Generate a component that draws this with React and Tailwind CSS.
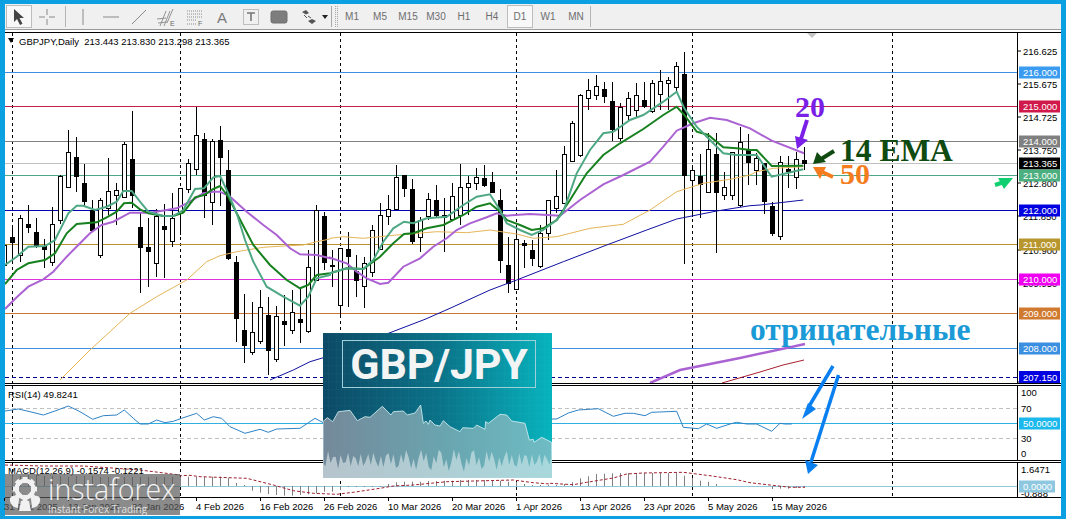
import React from "react";

// readings were taken off 3x crops, so every row is [x, y] or y values in crop pixels
const pts = (rows, x0, y0) => rows.map(([x, y]) => `${(x0 + x / 3).toFixed(1)},${(y0 + y / 3).toFixed(1)}`).join(" ");

// [high, low, bodyTop, bodyBottom, black]
const candlesA = [
  [440, 530, 465, 525, 0], [405, 520, 441, 458, 1], [375, 515, 385, 495, 0], [345, 430, 402, 413, 1], [385, 475, 427, 467, 1],
  [448, 535, 470, 478, 1], [352, 527, 403, 517, 0], [255, 402, 259, 392, 0], [120, 292, 187, 292, 0], [142, 305, 202, 260, 1],
  [222, 350, 280, 335, 1], [330, 425, 362, 420, 1], [325, 505, 332, 496, 0], [205, 375, 304, 355, 0], [280, 405, 301, 316, 0],
  [157, 325, 163, 322, 0], [63, 355, 208, 316, 1], [365, 608, 411, 472, 1], [385, 590, 472, 485, 1], [358, 560, 379, 520, 0],
  [342, 563, 408, 419, 1], [310, 470, 385, 455, 0], [295, 435, 295, 370, 0], [208, 310, 220, 298, 0], [50, 255, 136, 238, 0],
  [130, 383, 148, 315, 1], [148, 405, 155, 337, 0], [108, 347, 151, 203, 1], [180, 510, 240, 505, 1], [498, 755, 517, 686, 1],
  [612, 820, 720, 767, 1], [635, 795, 727, 787, 0], [600, 763, 652, 754, 0], [622, 855, 676, 780, 1], [648, 815, 679, 808, 0],
  [615, 767, 693, 704, 1], [600, 733, 667, 721, 0], [598, 760, 687, 698, 1], [480, 730, 532, 724, 0], [345, 570, 360, 570, 0],
  [367, 540, 378, 518, 1],
];
const candlesB = [
  [570, 680, 617, 620, 1], [565, 775, 565, 737, 0], [517, 740, 567, 590, 1], [585, 710, 633, 660, 1], [590, 743, 610, 680, 0],
  [495, 650, 511, 638, 0], [430, 570, 466, 568, 0], [405, 495, 449, 469, 0], [315, 450, 351, 449, 0], [347, 410, 347, 386, 1],
  [358, 552, 387, 543, 1], [470, 577, 481, 533, 0], [400, 480, 418, 470, 0], [375, 475, 421, 465, 1], [415, 575, 466, 472, 1],
  [370, 480, 408, 478, 0], [312, 495, 381, 467, 0], [348, 465, 370, 382, 0], [325, 390, 352, 370, 0], [315, 380, 354, 375, 1],
  [337, 400, 366, 396, 1], [388, 638, 420, 602, 1], [532, 698, 616, 669, 1], [508, 690, 538, 689, 0], [540, 625, 551, 555, 1],
  [540, 617, 571, 596, 1], [495, 625, 520, 620, 0], [420, 540, 421, 520, 0], [330, 460, 409, 445, 0], [258, 432, 283, 430, 0],
  [183, 307, 190, 305, 0], [102, 290, 105, 287, 0], [57, 150, 91, 115, 0], [45, 120, 79, 107, 0], [65, 128, 88, 110, 1],
  [67, 243, 124, 207, 1], [130, 243, 142, 236, 0], [97, 180, 115, 167, 0], [70, 175, 106, 150, 0], [65, 145, 120, 138, 1],
  [60, 160, 70, 155, 0], [30, 150, 64, 103, 0], [50, 150, 62, 70, 0], [5, 95, 18, 83, 0], [-24, 613, 42, 345, 1],
  [320, 470, 331, 361, 0], [283, 475, 349, 372, 1], [220, 400, 268, 397, 0], [220, 580, 283, 398, 1], [335, 420, 382, 406, 0],
  [277, 420, 278, 405, 0], [200, 440, 247, 437, 0], [222, 375, 270, 308, 1],
];
const candlesC = [
  [370, 465, 385, 422, 0], [400, 553, 400, 515, 1], [515, 618, 530, 610, 1], [378, 630, 397, 620, 0],
  [378, 475, 417, 425, 1], [365, 478, 388, 443, 0], [352, 420, 391, 401, 1],
];
const toOrig = (rows, y0) => rows.map((r) => ({ high: y0 + r[0] / 3, low: y0 + r[1] / 3, top: y0 + r[2] / 3, bottom: y0 + r[3] / 3, black: r[4] }));
const candles = [...toOrig(candlesA, 90), ...toOrig(candlesB, 60), ...toOrig(candlesC, 30)];

const lightGreen =
  pts([[15, 525], [50, 500], [85, 470], [135, 468], [165, 450], [205, 370], [230, 347], [250, 347], [285, 360], [320, 350], [350, 335], [370, 303], [395, 303], [420, 335], [445, 365], [490, 378], [520, 378], [550, 360], [585, 297], [612, 295], [640, 262], [660, 258], [685, 310], [710, 370], [735, 450], [760, 515], [800, 590], [850, 620], [900, 647], [925, 620], [950, 565], [990, 555]], 0, 90) + " " +
  pts([[0, 640], [50, 625], [100, 627], [130, 600], [160, 545], [190, 505], [222, 485], [250, 490], [290, 475], [350, 470], [400, 435], [440, 410], [480, 403], [510, 450], [530, 490], [570, 510], [605, 525], [640, 510], [680, 480], [700, 455], [740, 340], [780, 270], [820, 220], [850, 215], [900, 180], [940, 165], [1000, 125], [1040, 95], [1063, 145], [1100, 200], [1135, 235], [1180, 280], [1220, 285], [1260, 285]], 330, 60) + " " +
  pts([[50, 375], [95, 440], [130, 432], [190, 418]], 740, 30);
const darkGreen =
  pts([[15, 582], [50, 540], [85, 520], [135, 510], [165, 490], [200, 430], [230, 402], [290, 397], [320, 382], [350, 365], [372, 340], [395, 338], [420, 358], [445, 370], [490, 378], [520, 378], [550, 368], [585, 322], [612, 315], [640, 297], [660, 288], [685, 320], [710, 370], [760, 465], [810, 525], [860, 570], [900, 595], [925, 585], [950, 555], [990, 550]], 0, 90) + " " +
  pts([[0, 640], [50, 625], [100, 627], [150, 590], [190, 550], [222, 522], [250, 520], [290, 505], [340, 495], [400, 465], [440, 440], [480, 430], [510, 455], [530, 480], [570, 495], [605, 510], [640, 505], [680, 480], [720, 420], [770, 340], [820, 285], [870, 250], [940, 207], [1000, 165], [1040, 140], [1063, 165], [1100, 215], [1135, 225], [1180, 262], [1220, 265], [1260, 270]], 330, 60) + " " +
  pts([[50, 360], [95, 408], [190, 407]], 740, 30);
const purple =
  pts([[15, 657], [50, 622], [85, 590], [130, 568], [160, 545], [200, 500], [235, 465], [270, 430], [305, 405], [340, 395], [390, 368], [450, 368], [500, 360], [530, 355], [570, 335], [610, 310], [640, 305], [660, 305], [690, 320], [740, 365], [790, 405], [830, 435], [870, 475], [900, 493], [950, 495], [990, 505]], 0, 90) + " " +
  pts([[0, 593], [50, 610], [80, 635], [110, 655], [150, 672], [175, 668], [220, 620], [270, 595], [310, 560], [350, 535], [380, 510], [420, 490], [470, 472], [500, 460], [530, 467], [600, 462], [690, 467], [750, 420], [820, 373], [880, 345], [960, 305], [1000, 260], [1040, 212], [1090, 190], [1140, 173], [1190, 180], [1260, 205]], 330, 60) + " " +
  pts([[95, 332], [192, 370]], 740, 30);
const gold =
  pts([[180, 870], [270, 780], [390, 670], [470, 620], [560, 570], [620, 515], [660, 497], [710, 485], [790, 472], [850, 468], [910, 465], [950, 455], [990, 447]], 0, 90) + " " +
  pts([[0, 535], [40, 530], [100, 535], [200, 525], [320, 515], [410, 518], [480, 510], [560, 522], [610, 535], [680, 530], [780, 505], [880, 493], [960, 450], [1040, 395], [1120, 370], [1200, 358], [1260, 345]], 330, 60) + " " +
  pts([[50, 425], [100, 415], [190, 410]], 740, 30);
const navy =
  pts([[810, 870], [880, 840], [930, 815], [990, 797]], 0, 90) + " " +
  pts([[285, 778], [360, 745], [480, 690], [560, 660], [700, 605], [830, 555], [950, 510], [1040, 477], [1160, 453], [1260, 437]], 330, 60) + " " +
  pts([[60, 525], [190, 510]], 740, 30);
const slowPurple = "650,383 680,370 740,358 805,344";
const slowRed = "722,383 760,372 783,365 804,360";

const rsiLine =
  pts([[15, 93], [55, 87], [90, 95], [130, 105], [165, 93], [205, 78], [240, 95], [278, 118], [310, 107], [350, 105], [373, 90], [400, 115], [420, 132], [445, 132], [470, 120], [495, 128], [520, 124], [545, 115], [590, 100], [613, 120], [640, 110], [665, 115], [690, 140], [735, 160], [780, 148], [805, 157], [830, 147], [900, 145], [945, 115], [970, 128]], 0, 380) + " " +
  pts([[0, 105], [20, 105], [55, 87], [85, 78], [145, 74], [190, 97], [225, 88], [250, 88], [285, 95], [305, 85], [380, 82], [400, 130], [445, 134], [470, 120], [500, 133], [540, 120], [560, 115], [590, 120], [620, 120], [665, 142], [690, 118], [705, 120], [725, 120]], 550, 384);
const macdSignal =
  pts([[15, 255], [130, 258], [250, 258], [420, 270], [540, 285]], 0, 380) + " " +
  pts([[0, 47], [30, 46], [60, 50], [200, 55], [280, 75], [340, 92], [400, 100], [470, 103], [520, 97], [600, 85], [640, 78], [700, 75], [800, 65], [1000, 60], [1060, 68], [1110, 72]], 180, 460) + " " +
  pts([[0, 298], [70, 302], [110, 295], [190, 282], [230, 270], [280, 267], [400, 265], [480, 275], [560, 287], [600, 296], [660, 303], [720, 310], [765, 310]], 550, 384);
const macdBars = [
  486, 476, 476, 475, 475, 476, 476, 476, 477, 476, 476, 476, 477, 477, 477, 477, 477, 477, 477, 477, 477, 477, 476.7, 476.7, 476.7, 476.7, 476.7, 476.7, 478, 483, 485,
  490.7, 492.7, 494, 495, 495.7, 495.7, 495, 494.3, 493.3, 491.7, 491.7, 490, 487, 487, 487, 487, 487, 484, 482.3, 481.7, 481.7, 481.7, 481, 481, 480.7, 480.7, 480, 480, 480, 480, 480, 480.7, 481.7,
  482, 484, 485, 485, 485, 485, 484, 482.3, 478.3, 476.3, 474, 473.7, 473.3, 473, 473, 473, 473, 473, 473, 473, 473, 475.7, 478, 480.7, 481.7, 484, 486, 486, 486, 486, 486, 486, 489, 488.7, 488.7, 488, 487,
];

const levels = [
  { y: 72.5, color: "#3a8fe0" },
  { y: 106.5, color: "#c0204a" },
  { y: 141.5, color: "#808080" },
  { y: 163.5, color: "#c0c0c0" },
  { y: 175.5, color: "#4fa885" },
  { y: 210.5, color: "#0000b0" },
  { y: 244.5, color: "#b89030" },
  { y: 279.5, color: "#e030e0" },
  { y: 313.5, color: "#c87830" },
  { y: 348.5, color: "#3a8fe0" },
];
const priceTicks = [
  [51, "216.625"], [84, "215.675"], [117, "214.725"], [150, "213.750"], [183, "212.800"], [216, "211.850"],
  [250, "210.900"], [283, "209.950"], [382, "207.100"],
];
const priceLabels = [
  [72.5, "216.000", "#3a9bf0"], [106.5, "215.000", "#d0184a"], [141.5, "214.000", "#808080"], [163.5, "213.365", "#000000"],
  [175.5, "213.000", "#4caf80"], [210.5, "212.000", "#0000e0"], [244.5, "211.000", "#b8962e"], [279.5, "210.000", "#f000f0"],
  [313.5, "209.000", "#d07a30"], [348.5, "208.000", "#3a8fe0"], [377, "207.150", "#0000e0"],
];
const gridX = [12.5, 180.5, 340.5, 516.5, 692.5, 892.5];
const dates = ["31 Dec 2025", "12 Jan 2026", "22 Jan 2026", "4 Feb 2026", "16 Feb 2026", "26 Feb 2026", "10 Mar 2026", "20 Mar 2026", "1 Apr 2026", "13 Apr 2026", "23 Apr 2026", "5 May 2026", "15 May 2026"];

function Grid({ top, bottom }) {
  return gridX.map((x) => <line key={x} x1={x} x2={x} y1={top} y2={bottom} stroke="#000" strokeDasharray="3 3" />);
}

function MainChart() {
  return (
    <svg className="block w-[1012px] h-[350px]" viewBox="5 33 1012 350">
      <Grid top={33} bottom={383} />
      <polygon points="807,33 817,33 812,38" fill="#c4c4c4" />
      {levels.map((l) => <line key={l.y} x1={5} x2={1017} y1={l.y} y2={l.y} stroke={l.color} />)}
      <line x1={5} x2={1017} y1={377.5} y2={377.5} stroke="#000090" strokeDasharray="4 3" />
      {candles.map((c, k) => {
        const x = 4.5 + 8 * k;
        return (
          <g key={k} shapeRendering="crispEdges">
            <line x1={x} x2={x} y1={c.high} y2={c.low} stroke="#000" />
            <rect x={x - 2} y={c.top} width={4} height={Math.max(c.bottom - c.top, 1)} fill={c.black ? "#000" : "#fff"} stroke="#000" />
          </g>
        );
      })}
      <polyline points={gold} fill="none" stroke="#e5b558" />
      <polyline points={navy} fill="none" stroke="#1010a0" />
      <polyline points={slowPurple} fill="none" stroke="#ab63d3" strokeWidth="2.5" />
      <polyline points={slowRed} fill="none" stroke="#a82030" />
      <polyline points={purple} fill="none" stroke="#ab63d3" strokeWidth="2" />
      <polyline points={darkGreen} fill="none" stroke="#17801f" strokeWidth="2" />
      <polyline points={lightGreen} fill="none" stroke="#4fa885" strokeWidth="2" />
      <polygon points="8,38 14,38 11,43" fill="#000" />
      <text x={19} y={44.5} className="text-[9.5px]" xmlSpace="preserve">GBPJPY,Daily  213.443 213.830 213.298 213.365</text>
    </svg>
  );
}

function PriceAxis() {
  return (
    <svg className="block w-[43px] h-[350px]" viewBox="1018 33 43 350">
      {priceTicks.map(([y, t]) => (
        <g key={t}>
          <line x1={1018} x2={1021} y1={y} y2={y} stroke="#000" />
          <text x={1023} y={y + 3.5} className="text-[9.5px]">{t}</text>
        </g>
      ))}
      {priceLabels.map(([y, t, c]) => (
        <g key={t}>
          <rect x={1019} y={y - 6} width={41} height={12} fill={c} />
          <text x={1023} y={y + 3.5} fill="#fff" className="text-[9.5px]">{t}</text>
        </g>
      ))}
    </svg>
  );
}

function RsiPane() {
  return (
    <svg className="block w-[1012px] h-[74px]" viewBox="5 386 1012 74">
      <Grid top={386} bottom={460} />
      <line x1={5} x2={1017} y1={408.5} y2={408.5} stroke="#c0c0c0" strokeDasharray="4 3" />
      <line x1={5} x2={1017} y1={438.5} y2={438.5} stroke="#c0c0c0" strokeDasharray="4 3" />
      <line x1={5} x2={1017} y1={423.5} y2={423.5} stroke="#30b0e0" />
      <polyline points={rsiLine} fill="none" stroke="#2f82c4" />
      <text x={8} y={398} className="text-[9.5px]">RSI(14) 49.8241</text>
    </svg>
  );
}

function RsiAxis() {
  return (
    <svg className="block w-[43px] h-[74px]" viewBox="1018 386 43 74">
      {[[392, "100"], [408, "70"], [438, "30"], [453, "0"]].map(([y, t]) => (
        <text key={t} x={1021} y={y + 3.5} className="text-[9.5px]">{t}</text>
      ))}
      <rect x={1019} y={417.5} width={41} height={12} fill="#1ab8ec" />
      <text x={1023} y={427} fill="#fff" className="text-[9.5px]">50.0000</text>
    </svg>
  );
}

function MacdPane() {
  return (
    <svg className="block w-[1012px] h-[34px]" viewBox="5 463 1012 34">
      <Grid top={463} bottom={497} />
      <line x1={5} x2={1017} y1={486.5} y2={486.5} stroke="#90c8d8" />
      {macdBars.map((y, k) => <line key={k} x1={4.5 + 8 * k} x2={4.5 + 8 * k} y1={486} y2={y} stroke="#808080" />)}
      <polyline points={macdSignal} fill="none" stroke="#a02030" strokeDasharray="3 2" />
      <text x={8} y={474} className="text-[9.5px]">MACD(12,26,9) -0.1574 -0.1221</text>
    </svg>
  );
}

function MacdAxis() {
  return (
    <svg className="block w-[43px] h-[34px]" viewBox="1018 463 43 34">
      <text x={1021} y={472.5} className="text-[9.5px]">1.6471</text>
      <text x={1021} y={496.5} className="text-[9.5px]">-0.888</text>
      <rect x={1019} y={480.5} width={36} height={12} fill="#8ec8e0" />
      <text x={1023} y={490} fill="#fff" className="text-[9.5px]">0.0000</text>
    </svg>
  );
}

function Icon({ children }) {
  return <svg width="24" height="22" viewBox="0 0 24 22" fill="none" stroke="#8a8a8a">{children}</svg>;
}

const tools = [
  <><line x1="12" y1="3" x2="12" y2="19" /></>,
  <><line x1="4" y1="11" x2="20" y2="11" /></>,
  <><line x1="5" y1="18" x2="19" y2="4" /></>,
  <>
    <path d="M2 13l9 -1M3 17l9 -1M5 20L11 5M9 20L15 5M12 17L18 3" strokeWidth="0.9" />
    <text x="15" y="20" fontSize="7" fill="#666" stroke="none">E</text>
  </>,
  <>
    <path d="M4 5h15M4 8h15M4 11h15M4 14h10M4 18h10" strokeDasharray="1 1" />
    <text x="15" y="20" fontSize="7" fill="#666" stroke="none">F</text>
  </>,
  <text x="6" y="17" fontSize="15" fill="#7a7a7a" stroke="none" fontWeight="500">A</text>,
  <>
    <rect x="4.5" y="3.5" width="15" height="15" strokeDasharray="1 1" />
    <path d="M8 7h8M12 7v8" strokeWidth="1.6" stroke="#777" />
  </>,
  <rect x="4" y="5" width="16" height="12" rx="2" fill="#7d7d7d" stroke="#707070" />,
];

function Toolbar() {
  const periods = ["M1", "M5", "M15", "M30", "H1", "H4", "D1", "W1", "MN"];
  return (
    <div className="h-[26px] bg-[#f0f0f0] border-b border-[#9a9a9a] flex items-stretch">
      <div className="w-[28px] flex items-center justify-center py-[1px] px-[1px]">
        <div className="w-full h-full bg-[#f8f8f8] border border-[#bdbdbd] flex items-center justify-center">
          <svg width="14" height="18" viewBox="0 0 14 18"><path d="M2 1l0 13 3-3 3 6 2.5-1.2-3-5.8 4.5 0z" fill="#444" /></svg>
        </div>
      </div>
      <div className="w-[28px] flex items-center justify-center">
        <Icon><path d="M4 11h6M14 11h6M12 3v6M12 13v6" /></Icon>
      </div>
      <div className="w-[8px] flex justify-center py-[2px]"><div className="w-px bg-[#b5b5b5]" /></div>
      {tools.map((t, i) => (
        <div key={i} className="w-[28px] flex items-center justify-center"><Icon>{t}</Icon></div>
      ))}
      <div className="w-[38px] flex items-center pl-[7px] gap-[5px]">
        <svg width="17" height="16" viewBox="0 0 17 16">
          <path d="M2 3l4-2 3 3-3 1.5zM8 12l4-2 4 2-4 3z" fill="#555" />
          <path d="M4 6l3 3M8 7l3 2" stroke="#555" />
        </svg>
        <div className="w-0 h-0 border-x-[3px] border-x-transparent border-t-[4px] border-t-[#222]" />
      </div>
      <div className="w-[7px] flex gap-[3px] py-[2px]">
        <div className="w-px bg-[#a8a8a8]" />
        <div className="w-[3px] border-x border-dotted border-[#a8a8a8]" />
      </div>
      {periods.map((p) => (
        <div key={p} className="w-[28px] flex items-center justify-center py-[1px] text-[10px] text-[#6e6e6e]">
          {p === "D1" ? (
            <div className="w-[26px] h-full bg-[#f8f8f8] border border-[#bdbdbd] flex items-center justify-center">{p}</div>
          ) : p}
        </div>
      ))}
      <div className="w-px bg-[#b5b5b5] my-[2px]" />
    </div>
  );
}

const spikes = Array.from({ length: 92 }, (_, i) => {
  const y = 405 + 22 * Math.sin(i * 2.4) + 12 * Math.sin(i * 0.9 + 1) + 10 * Math.sin(i * 5.3);
  return `${9 + i * 7.55},${y.toFixed(0)}`;
}).join(" ");

function Banner() {
  return (
    <div className="absolute left-[323px] top-[333px] w-[229px] h-[145px] bg-linear-to-r from-[#0c4a66] via-[#0a7288] to-[#06b4be]">
      <svg className="absolute inset-0 w-full h-full" viewBox="9 24 687 435" preserveAspectRatio="none">
        <defs>
          <linearGradient id="areaFill" x1="0" x2="1" y1="0" y2="0">
            <stop offset="0" stopColor="#75899a" />
            <stop offset="0.55" stopColor="#69a6b0" />
            <stop offset="1" stopColor="#6fbcc4" />
          </linearGradient>
          <linearGradient id="spikeFill" x1="0" x2="1" y1="0" y2="0">
            <stop offset="0" stopColor="#b6c4cc" />
            <stop offset="1" stopColor="#a8d8dc" />
          </linearGradient>
          <pattern id="bannerGrid" width="24" height="24" patternUnits="userSpaceOnUse">
            <path d="M24 0H0V24" fill="none" stroke="#ffffff" strokeOpacity="0.07" strokeWidth="1.5" />
          </pattern>
        </defs>
        <rect x="9" y="24" width="687" height="435" fill="url(#bannerGrid)" />
        <polygon
          points="9,290 22,278 38,290 55,260 90,256 112,287 135,275 150,277 187,244 213,270 220,260 250,258 262,270 285,264 302,240 310,295 318,288 325,298 330,285 345,300 360,303 370,287 390,305 420,320 428,308 460,310 470,300 495,313 497,290 505,295 540,268 560,270 575,288 615,295 628,345 640,343 642,352 665,337 695,352 695,458 9,458"
          fill="url(#areaFill)"
          stroke="#cfeef2"
          strokeWidth="2.5"
        />
        <polygon points={`9,458 ${spikes} 696,458`} fill="url(#spikeFill)" />
      </svg>
      <div className="absolute left-[19px] top-[7px] w-[194px] h-[48px] border border-[#9fd0da] flex items-center justify-center font-['Roboto',sans-serif] font-bold text-[43px] leading-none tracking-[-0.2px] text-[#f3f4f4]">
        GBP/JPY
      </div>
    </div>
  );
}

function Logo() {
  return (
    <div className="absolute left-[5px] top-[474px] w-[175px] h-[41px] bg-[rgba(90,90,90,0.7)] font-['Open_Sans',sans-serif] text-white">
      <svg className="absolute left-[2px] top-[2px]" width="36" height="37" viewBox="0 0 36 37" fill="#f1f1f1">
        {[0, 45, 90, 135, 180, 225, 270, 315].map((a) => (
          <rect key={a} x="15.5" y="1" width="5" height="6" transform={`rotate(${a} 18 13)`} />
        ))}
        <circle cx="18" cy="13" r="8.5" fill="none" stroke="#f1f1f1" strokeWidth="4" />
        <path d="M3 22c3-4 7-2 9 1l-1 9c-4 0-9-4-8-10zM33 22c-3-4-7-2-9 1l1 9c4 0 9-4 8-10zM14 25h8l2 10h-12z" />
      </svg>
      <div className="absolute left-[43px] top-0 text-[28.5px] leading-[31px] font-light opacity-90">instaforex</div>
      <div className="absolute left-[43px] top-[29px] text-[10px] leading-[12px] opacity-75">Instant Forex Trading</div>
    </div>
  );
}

function Annotations() {
  const serif = "absolute font-['Liberation_Serif',serif] font-bold leading-none whitespace-nowrap";
  return (
    <>
      <svg className="absolute inset-0 pointer-events-none" width="1066" height="519" viewBox="0 0 1066 519">
        <line x1="807" y1="120" x2="800" y2="142" stroke="#7a1fe8" strokeWidth="4" />
        <polygon points="795,136 808,140 797,149" fill="#7a1fe8" />
        <line x1="834" y1="151" x2="818" y2="161" stroke="#0f4a10" strokeWidth="4" />
        <polygon points="817,152 826,162 813,164" fill="#0f4a10" />
        <line x1="833" y1="177" x2="820" y2="171" stroke="#f47c1c" strokeWidth="4" />
        <polygon points="826,167 820,179 813,167" fill="#f47c1c" />
        <line x1="995" y1="185" x2="1004" y2="182" stroke="#10cf70" strokeWidth="4" />
        <polygon points="998,178 1013,178 1004,189" fill="#10cf70" />
        <line x1="833" y1="366" x2="808" y2="408" stroke="#0a80f0" strokeWidth="3.5" />
        <polygon points="808,403 816,409 802,419" fill="#0a80f0" />
        <line x1="838.5" y1="375" x2="811" y2="462" stroke="#0a80f0" strokeWidth="3.5" />
        <polygon points="805,460 818,465 808,474" fill="#0a80f0" />
      </svg>
      <span className={`${serif} left-[795px] top-[92px] text-[30px] text-[#7a1fe8]`}>20</span>
      <span className={`${serif} left-[840px] top-[135px] text-[31.5px] text-[#0f4a10]`}>14 EMA</span>
      <span className={`${serif} left-[840px] top-[159px] text-[30px] text-[#f47c1c]`}>50</span>
      <span className={`${serif} left-[750px] top-[314px] text-[31.5px] text-[#1a9ad6]`}>отрицательные</span>
    </>
  );
}

export default function App() {
  return (
    <div className="relative w-[1066px] h-[519px] overflow-hidden bg-[#0ba0e2] pt-[4px] pl-[5px] pr-[5px] pb-[3px] font-['Liberation_Sans',Arial,sans-serif]">
      <Toolbar />
      <div className="h-[2px] bg-white" />
      <div className="bg-white">
        <div className="flex h-[352px] border-y border-black">
          <div className="border-r border-black"><MainChart /></div>
          <PriceAxis />
        </div>
        <div className="h-px" />
        <div className="flex h-[76px] border-y border-black">
          <div className="border-r border-black"><RsiPane /></div>
          <RsiAxis />
        </div>
        <div className="h-px" />
        <div className="flex h-[36px] border-y border-black">
          <div className="border-r border-black"><MacdPane /></div>
          <MacdAxis />
        </div>
        <div className="flex h-[18px] ml-[-1px] text-[9.5px] leading-[18px] text-black">
          {dates.map((d) => (
            <div key={d} className="relative w-[64px] shrink-0 whitespace-nowrap">
              <div className="absolute left-0 top-0 w-px h-[3px] bg-black" />
              {d}
            </div>
          ))}
        </div>
      </div>
      <Banner />
      <Logo />
      <Annotations />
    </div>
  );
}
